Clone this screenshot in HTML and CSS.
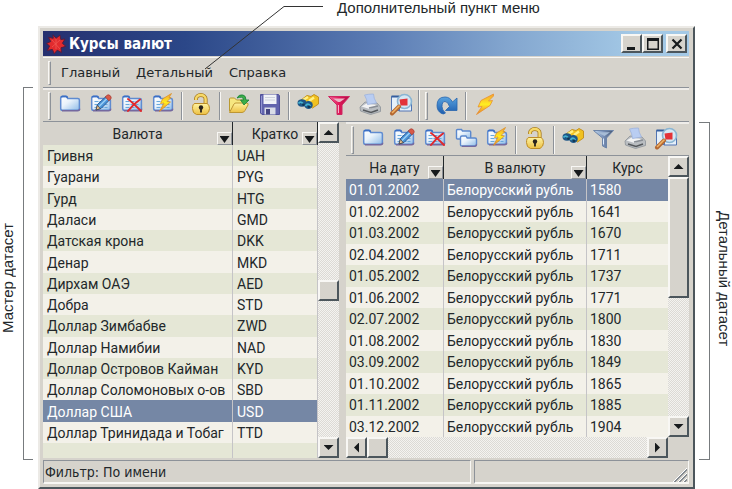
FILE: index.html
```html
<!DOCTYPE html>
<html lang="ru">
<head>
<meta charset="utf-8">
<title>Курсы валют</title>
<link rel="stylesheet" href="styles.css">
</head>
<body>
<svg class="defs" aria-hidden="true">
  <defs>
    <linearGradient id="gFolder" x1="0" y1="0" x2="1" y2="1"><stop offset="0" stop-color="#fff"/><stop offset=".4" stop-color="#eaf3fb"/><stop offset="1" stop-color="#8fbce8"/></linearGradient>
    <linearGradient id="gGold" x1="0" y1="0" x2="0" y2="1"><stop offset="0" stop-color="#fff3a0"/><stop offset="1" stop-color="#ecc044"/></linearGradient>
    <linearGradient id="gBolt" x1="0" y1="0" x2="0" y2="1"><stop offset="0" stop-color="#f5a030"/><stop offset=".5" stop-color="#ffee20"/><stop offset="1" stop-color="#e87830"/></linearGradient>
    <linearGradient id="gRed" x1="0" y1="0" x2="1" y2="0"><stop offset="0" stop-color="#f06a9a"/><stop offset=".5" stop-color="#e01858"/><stop offset="1" stop-color="#b01048"/></linearGradient>
    <linearGradient id="gSteel" x1="0" y1="0" x2="1" y2="0"><stop offset="0" stop-color="#c4dcf4"/><stop offset=".5" stop-color="#7890b8"/><stop offset="1" stop-color="#46566e"/></linearGradient>
    <linearGradient id="gBlue" x1="0" y1="0" x2="0" y2="1"><stop offset="0" stop-color="#5aa4e0"/><stop offset="1" stop-color="#1c5cae"/></linearGradient>
  </defs>
  <symbol id="folder" viewBox="0 0 24 24">
    <path d="M2.700 16.500V6q0-1.500 1.500-1.500h4q1.300 0 1.600 2h10q1.600 0 1.600 1.500v8.500q0 1.800-1.800 1.800H4.500q-1.800 0-1.800-1.800z" fill="url(#gFolder)" stroke="#5f8bd0" stroke-width="1.500"/>
    <path d="M4 18.800h15.500q2.200 0 2.200-2" fill="none" stroke="#75699f" stroke-width="1.400"/>
    <path d="M3.500 5.400q0-1 1-1h3.500q1 0 1.300 1.600" fill="none" stroke="#3c70c6" stroke-width="1.800"/>
  </symbol>
  <symbol id="list" viewBox="0 0 24 24">
    <use href="#folder"/>
    <path d="M5.500 9.500h13M5.500 12.500h13M5.500 15.500h13" stroke="#68a8dc" stroke-width="1.200" stroke-dasharray="4 1"/>
  </symbol>
  <symbol id="edit" viewBox="0 0 24 24">
    <use href="#list"/>
    <path d="M7 18l1.500-5.500 8.500-8 3.500 3.500-8.500 8.500z" fill="#4a94d8" stroke="#285a98"/>
    <path d="M10 14.500l8-8" stroke="#9cd0f6" stroke-width="1.500"/>
    <path d="M7 18l1.300-4.600 3 3.200z" fill="#f0c890" stroke="#4b4340" stroke-width=".8"/>
    <path d="M16.300 5l2-2q1.600-.6 3 .8t.6 3l-2 2z" fill="#d85a48" stroke="#a83c34" stroke-width=".8"/>
  </symbol>
  <symbol id="delete" viewBox="0 0 24 24">
    <use href="#list"/>
    <path d="M8 7q4 3 13 12M20 7.500q-6 4-12 11.500" fill="none" stroke="#e0282c" stroke-width="2" stroke-linecap="round"/>
  </symbol>
  <symbol id="quick" viewBox="0 0 24 24">
    <use href="#list"/>
    <path d="M20.500 1.500l-9 5.500-2 4.500 3.500-.5-4.500 8.500 11-9.500-3.500-.5 4-4h-2z" fill="url(#gBolt)" stroke="#dc9228" stroke-width=".8"/>
  </symbol>
  <symbol id="folders" viewBox="0 0 24 24">
    <path d="M2.500 12V4.500q0-1 1-1h4l1 1.500h7q1.200 0 1.200 1V12q0 1-1 1H3.500q-1 0-1-1z" fill="url(#gFolder)" stroke="#5b88cd" stroke-width="1.400"/>
    <path d="M6.500 19v-7.500q0-1.500 1.500-1.500h4l1.200 2H21q1.500 0 1.500 1.500V18q0 2-1.700 2H8q-1.500 0-1.500-1z" fill="url(#gFolder)" stroke="#5b88cd" stroke-width="1.400"/>
    <path d="M8 20.300h12.500q2 0 2-2" fill="none" stroke="#75699f" stroke-width="1.300"/>
  </symbol>
  <symbol id="lock" viewBox="0 0 24 24">
    <path d="M7 8V7a4.800 4 0 0 1 9.600 0V13" fill="none" stroke="#a87c20" stroke-width="4"/>
    <path d="M7 8V7a4.800 4 0 0 1 9.600 0V13" fill="none" stroke="#f7d968" stroke-width="2.400"/>
    <path d="M6 11.500h12q2.500 1 2.500 5T17 22.500H7.500q-4-1-4-6T6 11.500z" fill="url(#gGold)" stroke="#bd8d28"/>
    <circle cx="12" cy="15.500" r="2.200" fill="#29231c"/><path d="M11.100 16h1.800v4.500h-1.800z" fill="#29231c"/>
  </symbol>
  <symbol id="open" viewBox="0 0 24 24">
    <path d="M2.500 19V7q0-1 1-1h4l2 2h7v4z" fill="#f6e780" stroke="#ba9a30"/>
    <path d="M2.500 20.500l4.500-8.500q.5-1 2-1h10q3 0 2 2l-3 5.500q-1 2-3 2z" fill="url(#gGold)" stroke="#bd9634"/>
    <path d="M10 6q2-4 6-3 3 .7 3 5h3l-5 5-3.500-5h3q0-2.500-2-2.700T10 6z" fill="#3cae48" stroke="#18803a" stroke-width=".8"/>
  </symbol>
  <symbol id="save" viewBox="0 0 24 24">
    <path d="M2.500 2.500h18l1 1.200V22.500H4L2.500 21z" fill="#6264ad" stroke="#50519a"/>
    <path d="M5.500 2.500h13V12h-13z" fill="#f1f3f7"/><path d="M7 5.500h10M7 8h10" stroke="#cdd2dc"/>
    <path d="M6.500 15.500h11v7h-11z" fill="#d9dce7"/><path d="M8 17h4v5.500H8z" fill="#454682"/>
    <path d="M3.500 4v17" stroke="#9295d2"/>
  </symbol>
  <symbol id="find" viewBox="0 0 24 24">
    <path d="M5 8l6-4.500 4 1 3-2 4.500 2.500v7l-6 4-3-2z" fill="#f0c120" stroke="#c59220"/>
    <path d="M7 8l5-3M13 9l5-3.500" stroke="#fff085" stroke-width="2.500"/>
    <ellipse cx="6" cy="11" rx="4.500" ry="3.700" fill="#1e5788"/><ellipse cx="12.500" cy="13" rx="4.300" ry="4" fill="#1e5788"/>
    <path d="M2.500 11.500q2-3 5 .5M9.500 14q2-3.500 5 0" fill="none" stroke="#45b3d0" stroke-width="1.800"/>
    <circle cx="7.300" cy="12.600" r="1.300" fill="#123653"/><circle cx="13" cy="14.800" r="1.300" fill="#123653"/>
  </symbol>
  <symbol id="filterRed" viewBox="0 0 24 24">
    <path d="M1.500 4.500h21L15 13v9.500h-5V13z" fill="url(#gRed)" stroke="#cf2863"/><path d="M6 6.500h12L13 10h-2z" fill="#e9b7c6"/><path d="M11.500 13v8" stroke="#f7adc8"/>
  </symbol>
  <symbol id="filterSteel" viewBox="0 0 24 24">
    <path d="M1.500 4.500h20L14.500 12v10l-4-2v-8z" fill="url(#gSteel)" stroke="#6c84a8"/><path d="M5 6.300h13L12.500 10z" fill="#a8bdd6"/><path d="M11.500 12.500v6" stroke="#dcecff"/>
  </symbol>
  <symbol id="print" viewBox="0 0 24 24">
    <path d="M2 15l5-5 12 1 3.500 4v4.500l-10 3-10-3.500z" fill="#b9bdc1" stroke="#8b9298" stroke-width=".8"/>
    <path d="M3.500 14.500l5-3 10 1.500-7 4z" fill="#f1f2f3"/><path d="M6.500 3q4-1 9-1 0 4 3 9l-9 1.500Q9 7 6.500 3z" fill="#b9cdf2" stroke="#9db3dd" stroke-width=".8"/>
    <path d="M5 18l8 2.500 7-2.500" fill="none" stroke="#55595d" stroke-width="1.500"/><path d="M11 16l9-2" stroke="#888e95" stroke-width="1.500"/>
  </symbol>
  <symbol id="preview" viewBox="0 0 24 24">
    <path d="M2.500 4.500h8v14h-8zM10 8h12.500v11H10z" fill="#e6f0f9" stroke="#5275b3"/>
    <path d="M2.500 4.500h8" stroke="#355e9f" stroke-width="2"/>
    <circle cx="15.500" cy="9.500" r="7" fill="#d6e7f3" stroke="#8ab5d3" stroke-width="1.600"/>
    <path d="M10.500 7.500l8-1v7h-7z" fill="#e33238"/>
    <path d="M10 14.500l-7 7" stroke="#b46831" stroke-width="4" stroke-linecap="round"/><path d="M10 14l-6.500 6.500" stroke="#f0b266" stroke-width="1.600" stroke-linecap="round"/>
  </symbol>
  <symbol id="redo" viewBox="0 0 24 24">
    <path d="M6.500 21.500Q2 19 2 13.500 2 5 10 5q5 0 7.500 5l4.500-4v12.500H10.500l4-4Q13 9.500 10 9.500T7 14.500q0 3.500 3.500 6.500-2 1.500-4 .5z" fill="url(#gBlue)" stroke="#2764ad" stroke-width=".8"/>
  </symbol>
  <symbol id="bolt" viewBox="0 0 24 24">
    <path d="M20.500 2L8 8.500 5 15l4-.5L3.500 22.500 17 13.500l2.500-5-4 .5 5-5z" fill="url(#gBolt)" stroke="#e89030" stroke-width=".8"/>
  </symbol>
</svg>

<main class="figure">
  <p class="caption">Дополнительный пункт меню</p>

  <aside class="side side-left"><span>Мастер датасет</span><i class="bracket"></i></aside>

  <section class="window">
    <header class="titlebar">
      <svg class="logo" viewBox="0 0 20 20" aria-hidden="true"><path d="M7 .8l3 3.400 4-3 .8 4.300 4.200-.5-2.600 4.300 3.400 3-4.800 1.500.5 4.700-4.300-2.300-3 3.500-1.800-4.300-5 1 2.200-4.500L.5 9.500l4.200-2L2.500 3.300l4.700 1z" fill="#e22b2e" stroke="#571d3d"/><path d="M6 6l8 9M14 6l-8 7M10 5v10" stroke="#f25b56" stroke-width=".7"/></svg>
      <h1>Курсы валют</h1>
      <div class="winbtns">
        <button aria-label="Свернуть"><svg viewBox="0 0 16 14"><path d="M3 10h8v3H3z"/></svg></button>
        <button aria-label="Развернуть"><svg viewBox="0 0 16 14"><path d="M2 1h12v12H2zM3.500 4v7.500h9V4z" fill-rule="evenodd"/></svg></button>
        <button class="close" aria-label="Закрыть"><svg viewBox="0 0 16 14"><path d="M3.500 2.500l9 9M12.500 2.500l-9 9" stroke="#171a1c" stroke-width="2.200"/></svg></button>
      </div>
    </header>

    <nav class="menubar"><i class="grip"></i><button>Главный</button><button>Детальный</button><button>Справка</button></nav>

    <div class="toolbar main-tools">
      <i class="grip"></i>
      <button aria-label="Добавить"><svg><use href="#folder"/></svg></button>
      <button aria-label="Изменить"><svg><use href="#edit"/></svg></button>
      <button aria-label="Удалить"><svg><use href="#delete"/></svg></button>
      <button aria-label="Быстрая правка"><svg><use href="#quick"/></svg></button>
      <i class="sep"></i>
      <button aria-label="Блокировка"><svg><use href="#lock"/></svg></button>
      <i class="sep"></i>
      <button aria-label="Открыть"><svg><use href="#open"/></svg></button>
      <button aria-label="Сохранить"><svg><use href="#save"/></svg></button>
      <i class="sep"></i>
      <button aria-label="Найти"><svg><use href="#find"/></svg></button>
      <button aria-label="Фильтр"><svg><use href="#filterRed"/></svg></button>
      <button aria-label="Печать"><svg><use href="#print"/></svg></button>
      <button aria-label="Просмотр"><svg><use href="#preview"/></svg></button>
      <i class="divider"></i>
      <i class="grip"></i>
      <button aria-label="Обновить"><svg><use href="#redo"/></svg></button>
      <i class="sep"></i>
      <button aria-label="Выполнить"><svg><use href="#bolt"/></svg></button>
    </div>

    <div class="panes">
      <section class="master">
        <table class="grid">
          <colgroup><col class="c-name"><col class="c-code"></colgroup>
          <thead><tr><th>Валюта<button class="drop" aria-label="Фильтр: Валюта"></button></th><th>Кратко<button class="drop" aria-label="Фильтр: Кратко"></button></th></tr></thead>
          <tbody>
            <tr><td>Гривня</td><td>UAH</td></tr>
            <tr><td>Гуарани</td><td>PYG</td></tr>
            <tr><td>Гурд</td><td>HTG</td></tr>
            <tr><td>Даласи</td><td>GMD</td></tr>
            <tr><td>Датская крона</td><td>DKK</td></tr>
            <tr><td>Денар</td><td>MKD</td></tr>
            <tr><td>Дирхам ОАЭ</td><td>AED</td></tr>
            <tr><td>Добра</td><td>STD</td></tr>
            <tr><td>Доллар Зимбабве</td><td>ZWD</td></tr>
            <tr><td>Доллар Намибии</td><td>NAD</td></tr>
            <tr><td>Доллар Островов Кайман</td><td>KYD</td></tr>
            <tr><td>Доллар Соломоновых о-ов</td><td>SBD</td></tr>
            <tr class="selected"><td>Доллар США</td><td>USD</td></tr>
            <tr><td>Доллар Тринидада и Тобаг</td><td>TTD</td></tr>
            <tr class="filler"><td></td><td></td></tr>
          </tbody>
        </table>
        <div class="vscroll">
          <button class="up" aria-label="Вверх"></button>
          <i class="gap-before"></i><i class="thumb"></i><i class="gap-after"></i>
          <button class="down" aria-label="Вниз"></button>
        </div>
      </section>

      <section class="detail">
        <div class="toolbar">
          <i class="grip"></i>
          <button aria-label="Добавить"><svg><use href="#folder"/></svg></button>
          <button aria-label="Изменить"><svg><use href="#edit"/></svg></button>
          <button aria-label="Удалить"><svg><use href="#delete"/></svg></button>
          <button aria-label="Копировать"><svg><use href="#folders"/></svg></button>
          <button aria-label="Быстрая правка"><svg><use href="#quick"/></svg></button>
          <i class="sep"></i>
          <button aria-label="Блокировка"><svg><use href="#lock"/></svg></button>
          <i class="sep"></i>
          <button aria-label="Найти"><svg><use href="#find"/></svg></button>
          <button aria-label="Фильтр"><svg><use href="#filterSteel"/></svg></button>
          <button aria-label="Печать"><svg><use href="#print"/></svg></button>
          <button aria-label="Просмотр"><svg><use href="#preview"/></svg></button>
        </div>
        <div class="detail-body">
          <table class="grid">
            <colgroup><col class="c-date"><col class="c-cur"><col></colgroup>
            <thead><tr><th>На дату<button class="drop" aria-label="Фильтр: На дату"></button></th><th>В валюту<button class="drop" aria-label="Фильтр: В валюту"></button></th><th>Курс</th></tr></thead>
            <tbody>
              <tr class="selected"><td>01.01.2002</td><td>Белорусский рубль</td><td>1580</td></tr>
              <tr><td>01.02.2002</td><td>Белорусский рубль</td><td>1641</td></tr>
              <tr><td>01.03.2002</td><td>Белорусский рубль</td><td>1670</td></tr>
              <tr><td>02.04.2002</td><td>Белорусский рубль</td><td>1711</td></tr>
              <tr><td>01.05.2002</td><td>Белорусский рубль</td><td>1737</td></tr>
              <tr><td>01.06.2002</td><td>Белорусский рубль</td><td>1771</td></tr>
              <tr><td>02.07.2002</td><td>Белорусский рубль</td><td>1800</td></tr>
              <tr><td>01.08.2002</td><td>Белорусский рубль</td><td>1830</td></tr>
              <tr><td>03.09.2002</td><td>Белорусский рубль</td><td>1849</td></tr>
              <tr><td>01.10.2002</td><td>Белорусский рубль</td><td>1865</td></tr>
              <tr><td>01.11.2002</td><td>Белорусский рубль</td><td>1885</td></tr>
              <tr><td>03.12.2002</td><td>Белорусский рубль</td><td>1904</td></tr>
            </tbody>
          </table>
          <div class="vscroll">
            <button class="up" aria-label="Вверх"></button>
            <i class="thumb tall"></i><i class="gap-after"></i>
            <button class="down" aria-label="Вниз"></button>
          </div>
          <div class="hscroll">
            <button class="left" aria-label="Влево"></button>
            <i class="thumb"></i><i class="gap-after"></i>
            <button class="right" aria-label="Вправо"></button>
          </div>
        </div>
      </section>
    </div>

    <footer class="statusbar">
      <span class="filter-info">Фильтр: По имени</span>
      <span class="status-cell"><svg viewBox="0 0 16 16" aria-hidden="true"><path d="M1 16L15 2M6 16l9-9M11 16l4-4" stroke="#fff" stroke-width="1"/><path d="M2 16L15 3M3 16L15 4M7 16l8-8M8 16l7-7M12 16l3-3M13 16l2-2" stroke="#858b91" stroke-width="1"/></svg></span>
    </footer>
  </section>

  <aside class="side side-right"><i class="bracket"></i><span>Детальный датасет</span></aside>

  <svg class="leader" viewBox="0 0 120 70" aria-hidden="true"><path d="M1 69L80 6.500H119" fill="none" stroke="#333" stroke-width="1"/></svg>
</main>
</body>
</html>
```
FILE: styles.css
```css
:root {
  --face: #d6d3cc;
  --light: #f8f7f4;
  --shade: #8d9299;
  --dark: #4c565c;
  --ink: #22272a;
}
* { box-sizing: border-box; }
body { margin: 0; background: #fff; color: var(--ink); font: 14px/20px "Liberation Sans", Arial, sans-serif; }
.defs { position: absolute; width: 0; height: 0; }
button { margin: 0; padding: 0; border: 0; background: none; color: inherit; font: inherit; }
i { display: block; flex: none; }

.figure {
  position: relative;
  display: grid;
  grid-template: 26px 1fr / 38px 1fr 37px;
  height: 100vh;
  min-height: 489px;
}
.caption { grid-column: 2 / -1; margin: 0; padding-left: 299px; font-size: 15px; line-height: 16px; }
.leader { position: absolute; left: 204px; top: 0; width: 120px; height: 70px; }
.side { display: flex; font-size: 15px; line-height: 15px; }
.side span { writing-mode: vertical-rl; text-align: center; }
.side-left { grid-column: 1; padding: 61px 5px 29px 0; }
.side-left span { width: 23px; padding-bottom: 8px; transform: rotate(180deg); }
.side-left .bracket { width: 10px; border: 1px solid #777b7e; border-right: 0; }
.side-right { padding: 96px 0 29px 4px; }
.side-right .bracket { width: 11px; border: 1px solid #777b7e; border-left: 0; }
.side-right span { width: 22px; padding-bottom: 24px; }

.window {
  display: flex;
  flex-direction: column;
  min-width: 0;
  padding: 3px 4px 3px 3px;
  background: var(--face);
  border: 2px solid #eceae6;
  border-right-color: var(--dark);
  border-bottom-color: var(--dark);
}
.titlebar {
  display: flex;
  align-items: center;
  height: 25px;
  padding: 0 2px 0 3px;
  background: linear-gradient(90deg, #26306f, #2b4788 22%, #5b7cb4 52%, #83a6cf 72%, #a4c9e6 92%);
  color: #fff;
}
.logo { width: 20px; height: 20px; }
h1 { flex: 1; margin: 0 0 0 3px; font: bold 15px/20px "DejaVu Sans Condensed", "DejaVu Sans", sans-serif; }
.winbtns { display: flex; }
.winbtns button, .vscroll button, .hscroll button, .thumb {
  background: var(--face);
  border: 2px solid var(--light);
  border-right-color: var(--dark);
  border-bottom-color: var(--dark);
}
.winbtns button { width: 21px; height: 19px; padding: 0 1px; }
.winbtns .close { margin-left: 3px; }
.winbtns svg { display: block; width: 16px; height: 14px; fill: #171a1c; }

.menubar {
  display: flex;
  align-items: center;
  height: 31px;
  margin-top: 1px;
  border-top: 1px solid var(--light);
  border-bottom: 1px solid var(--shade);
  font: 13px/20px "DejaVu Sans", sans-serif;
}
.menubar button { margin-right: 16px; }
.menubar .grip { margin-right: 10px; }
.grip { width: 3px; height: 24px; margin: 0 3px 0 5px; border-left: 1px solid var(--light); border-right: 1px solid var(--shade); border-top: 1px solid var(--light); border-bottom: 1px solid var(--shade); }
.toolbar { display: flex; align-items: center; height: 34px; border-top: 2px solid #efedea; border-bottom: 1px solid var(--shade); }
.toolbar .grip { height: 28px; }
.toolbar button { width: 31px; height: 30px; padding-bottom: 3px; flex: none; }
.toolbar svg { display: block; width: 24px; height: 24px; margin: 0 auto; }
.detail .toolbar svg { position: relative; }
.sep { width: 2px; height: 28px; margin: 0 2px 0 3px; border-left: 1px solid var(--shade); border-right: 1px solid var(--light); }
.divider { width: 2px; height: 31px; margin-left: 2px; border-left: 1px solid var(--shade); border-right: 1px solid var(--light); }

.panes { flex: 1; display: flex; min-height: 0; }
.master { display: flex; width: 298px; flex: none; margin-right: 5px; }
.detail { flex: 1; display: flex; flex-direction: column; min-width: 0; }
.detail-body { flex: 1; display: grid; grid-template: 1fr 21px / 1fr 21px; min-height: 0; }
.grid { flex: 1; width: 100%; min-width: 0; table-layout: fixed; border-collapse: separate; border-spacing: 0; font: 14px/20px Roboto, "Liberation Sans", sans-serif; }
.c-name { width: 190px; }
.c-date { width: 98px; }
.c-cur { width: 143px; }
th { position: relative; height: 23px; padding: 0; background: var(--face); font-weight: normal; border-right: 1px solid var(--ink); text-align: center; }
.detail th:last-child { border-right: 0; }
.drop { position: absolute; right: 0; bottom: 0; width: 15px; height: 13px; border: 1px solid var(--light); border-right-color: var(--shade); border-bottom-color: var(--shade); background: var(--face); }
.drop::before { content: ""; display: block; width: 10px; height: 7px; margin: 2px auto 0; background: #171a1c; clip-path: polygon(0 0, 100% 0, 50% 100%); }
td { padding: 1px 0 0 4px; overflow: hidden; white-space: nowrap; border-right: 1px solid #c5c4c7; background: #f3f1e9; }
.detail td { padding-left: 3px; }
.detail td:last-child { border-right: 0; }
.master tr:nth-child(odd) td, .detail tr:nth-child(odd) td { background: #e5e7d6; }
.grid tr.selected td { background: #7587a5; color: #fff; }
.master .filler td { height: 15px; }

.vscroll, .hscroll { display: flex; background: repeating-conic-gradient(#dcdad5 0 25%, #f4f3f0 0 50%) 0 0 / 2px 2px; }
.vscroll { flex-direction: column; width: 21px; flex: none; }
.master .vscroll { width: 23px; border-right: 2px solid var(--face); }
.vscroll button { height: 21px; flex: none; }
.vscroll .thumb { height: 21px; }
.vscroll .thumb.tall { height: 121px; }
.gap-before { flex: 136; }
.gap-after { flex: 136; }
.hscroll button, .hscroll .thumb { width: 21px; flex: none; }
.vscroll button::before, .hscroll button::before { content: ""; display: block; margin: auto; background: #171a1c; }
.up::before, .down::before { width: 10px; height: 5px; }
.left::before, .right::before { width: 5px; height: 10px; }
.up::before { clip-path: polygon(50% 0, 100% 100%, 0 100%); }
.down::before { clip-path: polygon(0 0, 100% 0, 50% 100%); }
.left::before { clip-path: polygon(100% 0, 100% 100%, 0 50%); }
.right::before { clip-path: polygon(0 0, 100% 50%, 0 100%); }

.statusbar { display: flex; gap: 3px; height: 24px; margin-top: 2px; line-height: 20px; }
.statusbar span { border: 1px solid var(--shade); border-right-color: var(--light); border-bottom: 2px solid var(--light); padding-left: 1px; }
.filter-info { flex: 2; font: 14px/22px "DejaVu Sans Condensed", "DejaVu Sans", sans-serif; }
.status-cell { flex: 1; display: flex; justify-content: flex-end; align-items: flex-end; }
.status-cell svg { width: 16px; height: 16px; }
```
